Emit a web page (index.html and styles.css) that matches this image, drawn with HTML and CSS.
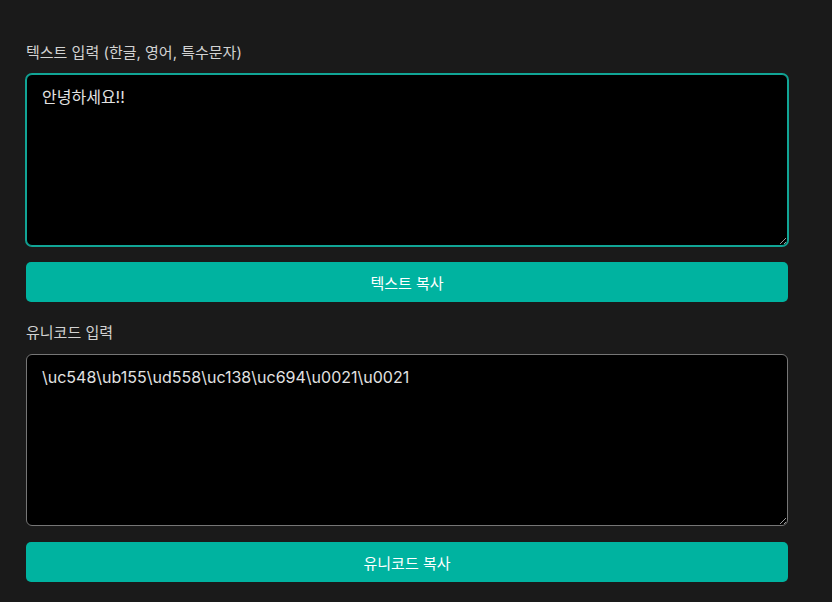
FILE: index.html
```html
<!DOCTYPE html>
<html lang="ko">
<head>
<meta charset="utf-8">
<title>유니코드 변환</title>
<link rel="stylesheet" href="styles.css">
</head>
<body>
<main class="app">
  <section class="field">
    <label class="label" for="text">텍스트 입력 (한글, 영어, 특수문자)</label>
    <textarea id="text" class="box box-focused">안녕하세요!!</textarea>
    <button class="btn" type="button">텍스트 복사</button>
  </section>
  <section class="field">
    <label class="label" for="uni">유니코드 입력</label>
    <textarea id="uni" class="box">\uc548\ub155\ud558\uc138\uc694\u0021\u0021</textarea>
    <button class="btn" type="button">유니코드 복사</button>
  </section>
</main>
</body>
</html>
```
FILE: styles.css
```css
html, body {
  margin: 0;
  padding: 0;
  background: #1a1a1a;
}
body {
  font-family: Inter, "Noto Sans CJK KR", sans-serif;
  color: #d4d4d4;
}
.app {
  width: 762px;
  margin-left: 26px;
  padding-top: 42px;
  display: flex;
  flex-direction: column;
  gap: 20px;
}
.field {
  display: flex;
  flex-direction: column;
}
.label {
  font-size: 15px;
  line-height: 21px;
  color: #d2d2d2;
  margin-bottom: 11px;
}
.box {
  box-sizing: border-box;
  width: 762px;
  height: 172px;
  margin: 0;
  background: #000;
  color: #e2e2e2;
  border: 1px solid #767676;
  border-radius: 6px;
  padding: 11px 15px;
  font-family: Inter, "Noto Sans CJK KR", sans-serif;
  font-size: 16px;
  line-height: 22px;
  outline: none;
}
.box-focused {
  border-color: #11a596;
  box-shadow: 0 0 0 1px #11a596;
}
.btn {
  margin-top: 16px;
  height: 40px;
  border: none;
  border-radius: 5px;
  background: #00b3a0;
  color: #ffffff;
  font-family: Inter, "Noto Sans CJK KR", sans-serif;
  font-size: 15px;
  font-weight: 400;
  cursor: pointer;
}
```
